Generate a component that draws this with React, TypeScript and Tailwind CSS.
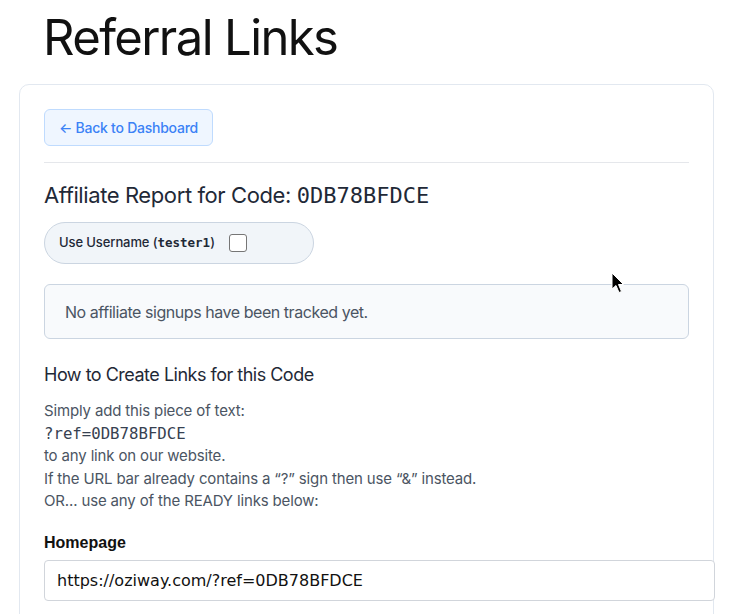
import React from "react";

const sans = "font-['Inter','Noto_Sans',sans-serif]";
const mono = "font-['DejaVu_Sans_Mono','Liberation_Mono',monospace]";

function Pointer() {
  return (
    <svg
      className="absolute left-[611px] top-[272px]"
      width="14"
      height="22"
      viewBox="0 0 14 22"
    >
      <path
        d="M1 1 L1 17 L5 13.5 L8 20.5 L10.5 19.5 L7.5 12.5 L12.5 12.5 Z"
        fill="#000"
        stroke="#fff"
        strokeWidth="1"
        strokeLinejoin="round"
      />
    </svg>
  );
}

export default function App() {
  const code = "0DB78BFDCE";
  return (
    <div className={`relative min-h-[614px] overflow-hidden bg-white ${sans} text-[#111827]`}>
      <h1 className="pl-[43px] pt-[8px] text-[49px] leading-[60px] tracking-[-1.6px] text-[#111]">
        Referral Links
      </h1>

      <div className="ml-[19px] mt-[16px] w-[695px] rounded-[10px] border border-[#e2e8f0] px-[24px] pt-[24px] pb-[24px]">
        <button className="flex h-[37px] items-center rounded-[6px] border border-[#bfdbfe] bg-[#eff6ff] px-[14px] text-[14px] font-medium tracking-[-0.25px] text-[#3b82f6]">
          ← Back to Dashboard
        </button>

        <hr className="mt-[16px] border-t border-[#e5e7eb]" />

        <h2 className="mt-[18px] text-[22px] leading-[28px] tracking-[-0.4px] text-[#1f2937]">
          Affiliate Report for Code:{" "}
          <span className={`${mono} text-[22px] tracking-normal`}>{code}</span>
        </h2>

        <label className="mt-[12px] flex h-[42px] w-[270px] items-center gap-[14px] rounded-full border border-[#cbd5e1] bg-[#f1f5f9] px-[14px] text-[13px] font-medium tracking-[-0.1px] text-[#1f2937]">
          <span>
            Use Username (<span className={`${mono} font-bold text-[12.5px] tracking-normal`}>tester1</span>)
          </span>
          <span className="h-[18px] w-[18px] rounded-[3px] border border-[#767676] bg-white" />
        </label>

        <div className="mt-[20px] flex h-[55px] items-center rounded-[6px] border border-[#cbd5e1] bg-[#f8fafc] px-[20px] text-[16px] tracking-[-0.45px] text-[#4b5563]">
          No affiliate signups have been tracked yet.
        </div>

        <h3 className="mt-[23px] text-[18px] leading-[26px] tracking-[-0.5px] text-[#1f2937]">
          How to Create Links for this Code
        </h3>

        <div className="mt-[12px] text-[15px] leading-[22.6px] tracking-[-0.15px] text-[#4b5563]">
          <div>Simply add this piece of text:</div>
          <div className={`${mono} text-[15.7px] leading-[22.6px] tracking-normal text-[#374151]`}>?ref={code}</div>
          <div>to any link on our website.</div>
          <div>If the URL bar already contains a “?” sign then use “&amp;” instead.</div>
          <div>OR... use any of the READY links below:</div>
        </div>

        <div className="mt-[18px] font-['Liberation_Sans',sans-serif] text-[16px] font-bold text-[#111]">
          Homepage
        </div>
        <input
          readOnly
          value={`https://oziway.com/?ref=${code}`}
          className="mt-[5px] h-[41px] w-[671px] rounded-[4px] border border-[#d1d5db] bg-white px-[12px] font-['DejaVu_Sans',sans-serif] text-[16px] text-[#111] outline-none"
        />
      </div>

      <Pointer />
    </div>
  );
}
